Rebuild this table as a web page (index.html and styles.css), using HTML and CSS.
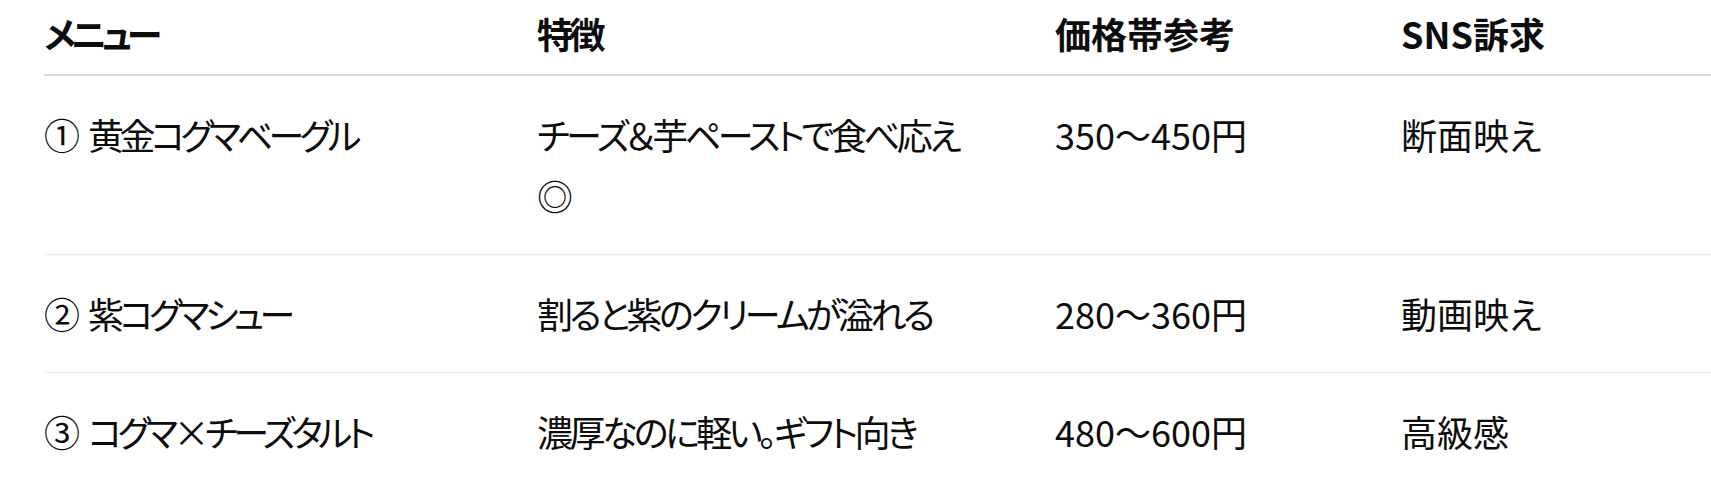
FILE: index.html
```html
<!DOCTYPE html>
<html lang="ja">
<head>
<meta charset="utf-8">
<link rel="stylesheet" href="styles.css">
</head>
<body>
<div class="wrap">
<table class="menu-table">
  <colgroup>
    <col class="c1"><col class="c2"><col class="c3"><col class="c4">
  </colgroup>
  <thead>
    <tr><th>メニュー</th><th>特徴</th><th>価格帯参考</th><th>SNS訴求</th></tr>
  </thead>
  <tbody>
    <tr><td>① 黄金コグマベーグル</td><td>チーズ＆芋ペーストで食べ応え◎</td><td>350〜450円</td><td>断面映え</td></tr>
    <tr><td>② 紫コグマシュー</td><td>割ると紫のクリームが溢れる</td><td>280〜360円</td><td>動画映え</td></tr>
    <tr><td>③ コグマ×チーズタルト</td><td>濃厚なのに軽い。ギフト向き</td><td>480〜600円</td><td>高級感</td></tr>
  </tbody>
</table>
</div>
</body>
</html>
```

FILE: styles.css
```css
html, body {
  margin: 0;
  padding: 0;
  background: #fff;
}
.wrap {
  padding-left: 44px;
  overflow: hidden;
}
.menu-table {
  border-collapse: collapse;
  table-layout: fixed;
  width: 1667px;
  font-family: "Noto Sans CJK JP", sans-serif;
  font-size: 36px;
  color: #0d0d0d;
  font-feature-settings: "palt";
}
.c1 { width: 493px; }
.c2 { width: 518px; }
.c3 { width: 346px; }
.c4 { width: 310px; }
th, td {
  text-align: left;
  vertical-align: top;
  line-height: 61px;
  padding: 28px 70px 28px 0;
}
th:nth-child(2),
td:nth-child(2) {
  letter-spacing: -3.5px;
}
td:first-child {
  letter-spacing: -4.5px;
  word-spacing: 9px;
}
th:first-child {
  letter-spacing: -5px;
}
th {
  font-weight: 700;
  padding-top: 3px;
  padding-bottom: 10px;
  border-bottom: 2px solid #d9d9d9;
}
tbody tr + tr td {
  border-top: 1px solid #ececec;
}
```
